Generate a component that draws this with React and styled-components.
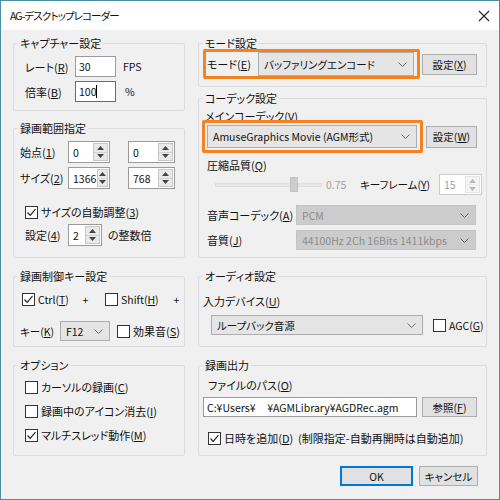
import React from "react";
import styled, { createGlobalStyle } from "styled-components";

const GlobalStyle = createGlobalStyle`
  html, body { margin: 0; padding: 0; background: #fff; }
  body {
    font-family: "Noto Sans CJK JP", "Noto Sans", sans-serif;
    font-size: 10.5px;
    color: #111;
    font-feature-settings: "palt";
  }
  * { box-sizing: border-box; }
`;

const Window = styled.div`
  width: 500px;
  height: 500px;
  border: 1px solid #4b8ea4;
  display: flex;
  flex-direction: column;
  background: #f0f0f0;
`;
const TitleBar = styled.div`
  height: 29px;
  flex: none;
  background: #fff;
  display: flex;
  align-items: center;
  justify-content: space-between;
  padding: 0 9px 0 9px;
`;
const Title = styled.span`
  font-size: 10.5px;
  letter-spacing: -0.9px;
`;
const Content = styled.div`
  padding: 5px 11px 0 12px;
`;
const Grid = styled.div`
  display: grid;
  grid-template-columns: 172px 289px;
  grid-template-rows: 223px 79px 99px;
  column-gap: 13px;
  row-gap: 10px;
`;
const Column = styled.div`
  display: flex;
  flex-direction: column;
  gap: ${p => p.$gap}px;
`;
const Group = styled.fieldset`
  margin: 0;
  padding: 0;
  min-width: 0;
  border: 1px solid #dcdcdc;
  border-radius: 2px;
  height: ${p => (p.$h ? p.$h + "px" : "auto")};
  flex: ${p => (p.$grow ? 1 : "none")};
`;
const Legend = styled.legend`
  padding: 0 2px;
  margin-left: 4px;
  line-height: 16px;
  font-size: 11px;
`;
const Body = styled.div`
  padding: ${p => p.$pt || 0}px 0 0 ${p => p.$pl || 0}px;
`;
const Row = styled.div`
  display: flex;
  align-items: center;
  height: ${p => p.$h}px;
  margin-top: ${p => p.$mt || 0}px;
  margin-left: ${p => p.$ml || 0}px;
`;
const Label = styled.span`
  display: inline-block;
  width: ${p => (p.$w ? p.$w + "px" : "auto")};
  margin-left: ${p => p.$ml || 0}px;
  flex: none;
  white-space: nowrap;
  font-size: ${p => (p.$big ? "11px" : "inherit")};
  color: ${p => (p.$dim ? "#a0a0a0" : "#111")};
`;
const TextLine = styled.div`
  height: 16px;
  line-height: 16px;
  margin-top: ${p => p.$mt || 0}px;
  margin-left: ${p => p.$ml || 0}px;
  white-space: nowrap;
  font-size: 11px;
`;
const U = styled.span`
  text-decoration: underline;
`;
const TextBox = styled.div`
  width: ${p => p.$w}px;
  height: 100%;
  flex: none;
  background: #fff;
  border: 1px solid ${p => (p.$focus ? "#2f8196" : "#9a9a9a")};
  display: flex;
  align-items: center;
  padding-left: 3px;
  white-space: pre;
  overflow: hidden;
`;
const Caret = styled.span`
  display: inline-block;
  width: 1px;
  height: 13px;
  background: #000;
`;
const SpinBox = styled.div`
  width: ${p => p.$w}px;
  height: 100%;
  flex: none;
  margin-left: ${p => p.$ml || 0}px;
  display: flex;
  background: #fff;
  border: 1px solid ${p => (p.$disabled ? "#cccccc" : "#9a9a9a")};
  color: ${p => (p.$disabled ? "#a0a0a0" : "#111")};
`;
const SpinText = styled.div`
  flex: 1;
  display: flex;
  align-items: center;
  padding-left: 4px;
`;
const SpinButtons = styled.div`
  width: 15px;
  margin: 1px;
  display: flex;
  flex-direction: column;
  gap: 1px;
  background: ${p => (p.$disabled ? "#ececec" : "#d2d2d2")};
  border: 1px solid ${p => (p.$disabled ? "#e4e4e4" : "#c8c8c8")};
`;
const SpinBtn = styled.div`
  flex: 1;
  display: flex;
  align-items: center;
  justify-content: center;
  background: ${p => (p.$disabled ? "#f4f4f4" : "#e9e9e9")};
`;
const Combo = styled.div`
  width: ${p => p.$w}px;
  height: 100%;
  flex: none;
  margin-left: ${p => p.$ml || 0}px;
  display: flex;
  align-items: center;
  justify-content: space-between;
  padding: 0 6px 0 5px;
  background: ${p => (p.$disabled ? "#cccccc" : "#e5e5e5")};
  border: 1px solid ${p => (p.$disabled ? "#c4c4c4" : "#adadad")};
  color: ${p => (p.$disabled ? "#8c8c8c" : "#111")};
  white-space: nowrap;
`;
const Button = styled.div`
  width: ${p => p.$w}px;
  height: ${p => p.$h || 21}px;
  flex: none;
  margin-left: ${p => p.$ml || 0}px;
  display: flex;
  align-items: center;
  justify-content: center;
  background: #e1e1e1;
  border: 1px solid ${p => (p.$default ? "#0078d7" : "#adadad")};
  box-shadow: ${p => (p.$default ? "inset 0 0 0 1px #0078d7" : "none")};
`;
const Highlight = styled.div`
  display: flex;
  align-items: center;
  width: ${p => p.$w}px;
  height: ${p => p.$h}px;
  flex: none;
  margin-left: ${p => p.$ml || 0}px;
  margin-top: ${p => p.$mt || 0}px;
  border: 3px solid #f5821f;
  border-radius: 2px;
  padding: ${p => p.$pad};
  position: relative;
`;
const CheckWrap = styled.span`
  display: inline-flex;
  align-items: center;
  flex: none;
  width: ${p => (p.$w ? p.$w + "px" : "auto")};
  margin-left: ${p => p.$ml || 0}px;
  white-space: nowrap;
  font-size: ${p => (p.$big ? "11px" : "inherit")};
`;
const Box = styled.span`
  width: 13px;
  height: 13px;
  flex: none;
  border: 1px solid #333;
  background: #fff;
  display: inline-flex;
  align-items: center;
  justify-content: center;
  margin-right: 3px;
`;
const Plus = styled.span`
  width: ${p => p.$w}px;
  margin-right: ${p => p.$mr || 0}px;
  text-align: center;
  flex: none;
`;
const Track = styled.div`
  width: 107px;
  height: 4px;
  margin-left: 12px;
  flex: none;
  background: #e7e7e7;
  border: 1px solid #dedede;
  position: relative;
`;
const Thumb = styled.div`
  position: absolute;
  left: 74px;
  top: -7px;
  width: 8px;
  height: 15px;
  background: #cccccc;
  border: 1px solid #c2c2c2;
`;
const Footer = styled.div`
  display: flex;
  justify-content: flex-end;
  gap: 6px;
  margin-top: 10px;
  padding-right: 10px;
`;

const Chevron = () => (
  <svg width="9" height="5" viewBox="0 0 9 5">
    <polyline points="0.5,0.5 4.5,4.5 8.5,0.5" fill="none" stroke="#666" strokeWidth="1" />
  </svg>
);

const Tri = ({ up, disabled }) => (
  <svg width="7" height="4" viewBox="0 0 7 4">
    <polygon points={up ? "0,4 3.5,0 7,4" : "0,0 3.5,4 7,0"} fill={disabled ? "#b8b8b8" : "#444"} />
  </svg>
);

const Spin = ({ w, ml, value, disabled }) => (
  <SpinBox $w={w} $ml={ml} $disabled={disabled}>
    <SpinText>{value}</SpinText>
    <SpinButtons $disabled={disabled}>
      <SpinBtn $disabled={disabled}><Tri up disabled={disabled} /></SpinBtn>
      <SpinBtn $disabled={disabled}><Tri disabled={disabled} /></SpinBtn>
    </SpinButtons>
  </SpinBox>
);

const Select = ({ w, ml, disabled, children }) => (
  <Combo $w={w} $ml={ml} $disabled={disabled}>
    <span>{children}</span>
    <Chevron />
  </Combo>
);

const Check = ({ checked, w, ml, big, children }) => (
  <CheckWrap $w={w} $ml={ml} $big={big}>
    <Box>
      {checked && (
        <svg width="11" height="11" viewBox="0 0 11 11">
          <polyline points="1.5,5.5 4.2,8.3 9.5,2.2" fill="none" stroke="#222" strokeWidth="1.2" />
        </svg>
      )}
    </Box>
    {children}
  </CheckWrap>
);

export default function App() {
  return (
    <>
      <GlobalStyle />
      <Window>
        <TitleBar>
          <Title>AG-デスクトップレコーダー</Title>
          <svg width="12" height="12" viewBox="0 0 12 12">
            <path d="M1 1 L11 11 M11 1 L1 11" stroke="#222" strokeWidth="1.1" />
          </svg>
        </TitleBar>
        <Content>
          <Grid>
            <Column $gap={9}>
              <Group $h={76}>
                <Legend>キャプチャー設定</Legend>
                <Body $pt={5} $pl={11}>
                  <Row $h={21}>
                    <Label $w={50} $big>レート(<U>R</U>)</Label>
                    <TextBox $w={41}>30</TextBox>
                    <Label $ml={7}>FPS</Label>
                  </Row>
                  <Row $h={21} $mt={4}>
                    <Label $w={50} $big>倍率(<U>B</U>)</Label>
                    <TextBox $w={41} $focus>100<Caret /></TextBox>
                    <Label $ml={9}>%</Label>
                  </Row>
                </Body>
              </Group>
              <Group $grow>
                <Legend>録画範囲指定</Legend>
                <Body $pt={5} $pl={6}>
                  <Row $h={22}>
                    <Label $w={48} $big>始点(<U>1</U>)</Label>
                    <Spin w={42} value="0" />
                    <Spin w={47} ml={18} value="0" />
                  </Row>
                  <Row $h={22} $mt={4}>
                    <Label $w={48} $big>サイズ(<U>2</U>)</Label>
                    <Spin w={42} value="1366" />
                    <Spin w={47} ml={18} value="768" />
                  </Row>
                  <Row $h={16} $mt={15} $ml={5}>
                    <Check checked big>サイズの自動調整(<U>3</U>)</Check>
                  </Row>
                  <Row $h={22} $mt={4} $ml={5}>
                    <Label $w={43} $big>設定(<U>4</U>)</Label>
                    <Spin w={34} value="2" />
                    <Label $ml={6} $big>の整数倍</Label>
                  </Row>
                </Body>
              </Group>
            </Column>

            <Column $gap={3}>
              <Group $h={52}>
                <Legend>モード設定</Legend>
                <Body $pl={4}>
                  <Row $h={30} $mt={-2}>
                    <Highlight $w={217} $h={30} $pad="0 3px 0 1px">
                      <Label $w={51} $big>モード(<U>E</U>)</Label>
                      <Select w={156}>バッファリングエンコード</Select>
                    </Highlight>
                    <Button $w={55} $ml={2}>設定(<U>X</U>)</Button>
                  </Row>
                </Body>
              </Group>
              <Group $grow>
                <Legend>コーデック設定</Legend>
                <Body $pl={4}>
                  <TextLine $mt={2} $ml={2}>メインコーデック(<U>V</U>)</TextLine>
                  <Row $h={33} $mt={-4}>
                    <Highlight $w={221} $h={33} $ml={-1} $pad="2px 3px 2px 2px">
                      <Select w={210}>AmuseGraphics Movie (AGM形式)</Select>
                    </Highlight>
                    <Button $w={51} $h={22} $ml={3}>設定(<U>W</U>)</Button>
                  </Row>
                  <TextLine $mt={4} $ml={4}>圧縮品質(<U>Q</U>)</TextLine>
                  <Row $h={21} $mt={1}>
                    <Track><Thumb /></Track>
                    <Label $w={34} $ml={4} $dim>0.75</Label>
                    <Label $w={79}>キーフレーム(<U>Y</U>)</Label>
                    <Spin w={43} value="15" disabled />
                  </Row>
                  <Row $h={20} $mt={10}>
                    <Label $w={89} $ml={4} $big>音声コーデック(<U>A</U>)</Label>
                    <Select w={180} disabled>PCM</Select>
                  </Row>
                  <Row $h={20} $mt={5}>
                    <Label $w={89} $ml={4} $big>音質(<U>J</U>)</Label>
                    <Select w={180} disabled>44100Hz 2Ch 16Bits 1411kbps</Select>
                  </Row>
                </Body>
              </Group>
            </Column>

            <Group>
              <Legend>録画制御キー設定</Legend>
              <Body $pt={7} $pl={8}>
                <Row $h={16}>
                  <Check checked w={59}>Ctrl(<U>T</U>)</Check>
                  <Plus $w={9} $mr={15}>+</Plus>
                  <Check w={67}>Shift(<U>H</U>)</Check>
                  <Plus $w={9}>+</Plus>
                </Row>
                <Row $h={20} $mt={14} $ml={-2}>
                  <Label $w={40}>キー(<U>K</U>)</Label>
                  <Select w={50}>F12</Select>
                  <Check ml={7} big>効果音(<U>S</U>)</Check>
                </Row>
              </Body>
            </Group>

            <Group>
              <Legend>オーディオ設定</Legend>
              <Body $pl={4}>
                <TextLine $mt={9}>入力デバイス(<U>U</U>)</TextLine>
                <Row $h={20} $mt={6}>
                  <Select w={212} ml={8}>ループバック音源</Select>
                  <Check ml={10}>AGC(<U>G</U>)</Check>
                </Row>
              </Body>
            </Group>

            <Group>
              <Legend>オプション</Legend>
              <Body $pt={2} $pl={11}>
                <Row $h={24}>
                  <Check big>カーソルの録画(<U>C</U>)</Check>
                </Row>
                <Row $h={24}>
                  <Check big>録画中のアイコン消去(<U>I</U>)</Check>
                </Row>
                <Row $h={24}>
                  <Check checked big>マルチスレッド動作(<U>M</U>)</Check>
                </Row>
              </Body>
            </Group>

            <Group>
              <Legend>録画出力</Legend>
              <Body $pl={4}>
                <TextLine $mt={4} $ml={5}>ファイルのパス(<U>O</U>)</TextLine>
                <Row $h={20} $mt={4}>
                  <TextBox $w={214}>{"C:¥Users¥     ¥AGMLibrary¥AGDRec.agm"}</TextBox>
                  <Button $w={55} $h={20} $ml={5}>参照(<U>F</U>)</Button>
                </Row>
                <Row $h={16} $mt={13} $ml={5}>
                  <Check checked big>日時を追加(<U>D</U>)&nbsp;&nbsp;(制限指定-自動再開時は自動追加)</Check>
                </Row>
              </Body>
            </Group>
          </Grid>
          <Footer>
            <Button $w={73} $h={20} $default>OK</Button>
            <Button $w={59} $h={20}>キャンセル</Button>
          </Footer>
        </Content>
      </Window>
    </>
  );
}
